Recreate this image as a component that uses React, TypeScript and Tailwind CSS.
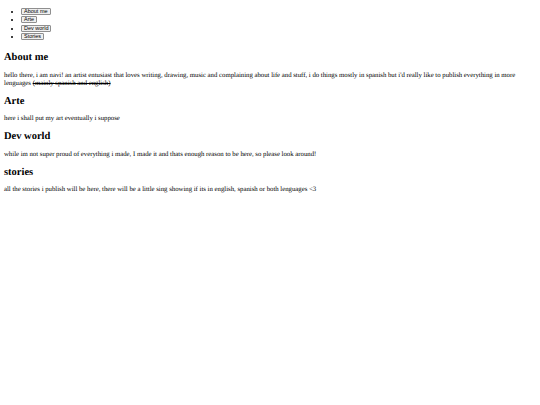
export default function App() {
  const tabs = ['About me', 'Arte', 'Dev world', 'Stories'];
  return (
    <div className="min-h-screen bg-white px-[4px] py-px text-black text-[6.75px] leading-[8px] [text-rendering:geometricPrecision] font-['Liberation_Serif',serif]">
      <ul className="mt-[7px] mb-[11px] list-disc pl-[17px]">
        {tabs.map((t) => (
          <li key={t} className="h-[8.3px] leading-[8.3px]">
            <button className="h-[7px] align-top border border-[#8f8f8f] bg-[#efefef] px-[2px] py-0 text-[5.5px] leading-[5px] rounded-[1px] font-['Liberation_Sans',sans-serif]">
              {t}
            </button>
          </li>
        ))}
      </ul>

      <h2 className="text-[10.5px] leading-[1.1] font-bold my-[8px]">About me</h2>
      <p className="my-[6.5px]">
        hello there, i am navi! an artist entusiast that loves writing, drawing, music and complaining about life and stuff, i do things mostly in spanish but i'd really like to publish everything in more lenguages <s>(mainly spanish and english)</s>
      </p>

      <h2 className="text-[10.5px] leading-[1.1] font-bold my-[8px]">Arte</h2>
      <p className="my-[6.5px]">here i shall put my art eventually i suppose</p>

      <h2 className="text-[10.5px] leading-[1.1] font-bold my-[8px]">Dev world</h2>
      <p className="my-[6.5px]">
        while im not super proud of everything i made, I made it and thats enough reason to be here, so please look around!
      </p>

      <h2 className="text-[10.5px] leading-[1.1] font-bold my-[8px]">stories</h2>
      <p className="my-[6.5px]">
        all the stories i publish will be here, there will be a little sing showing if its in english, spanish or both lenguages &lt;3
      </p>
    </div>
  );
}
